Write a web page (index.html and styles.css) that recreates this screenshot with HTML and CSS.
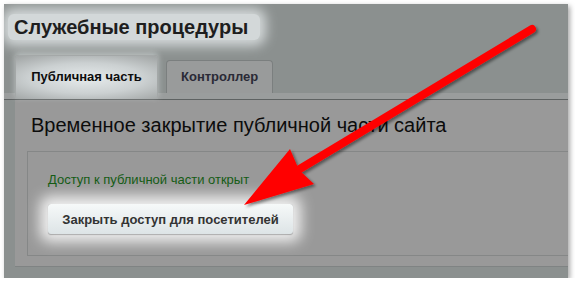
FILE: index.html
```html
<!DOCTYPE html>
<html lang="ru">
<head>
  <meta charset="UTF-8">
  <title>Служебные процедуры</title>
  <link rel="stylesheet" href="styles.css">
</head>
<body>
  <div class="shot">
    <div class="page-title"><h1>Служебные процедуры</h1></div>

    <div class="tabs">
      <div class="tab tab-active">Публичная часть</div>
      <div class="tab">Контроллер</div>
    </div>

    <div class="panel">
      <h2>Временное закрытие публичной части сайта</h2>
      <div class="inner-box">
        <p class="status-ok">Доступ к публичной части открыт</p>
        <button class="close-button" type="button">Закрыть доступ для посетителей</button>
      </div>
    </div>

    <!-- annotation arrow -->
    <svg class="arrow" width="575" height="286" viewBox="0 0 575 286">
      <defs>
        <filter id="shade" x="-10%" y="-10%" width="120%" height="120%">
          <feDropShadow dx="2" dy="2" stdDeviation="1.5" flood-color="#000" flood-opacity="0.45"/>
        </filter>
      </defs>
      <g filter="url(#shade)" fill="#ff0000">
        <line x1="532" y1="29" x2="298" y2="170" stroke="#ff0000" stroke-width="8" stroke-linecap="round"/>
        <polygon points="244,205 290,149 299,170 314,184"/>
      </g>
    </svg>
  </div>
</body>
</html>
```

FILE: styles.css
```css
body, html {
  margin: 0;
  padding: 0;
  background: #ffffff;
  font-family: 'Liberation Sans', Arial, sans-serif;
}

.shot {
  position: relative;
  width: 564px;
  height: 274px;
  margin: 4px 0 0 4px;
  background: #8b908f;
  overflow: hidden;
  box-shadow: 2px 2px 5px rgba(0,0,0,0.35);
}

.page-title {
  padding: 10px 0 0 4px;
  height: 34px;
  box-sizing: border-box;
}

h1 {
  display: inline-block;
  margin: 0;
  padding: 0 12px 0 6px;
  font-size: 20px;
  line-height: 26px;
  font-weight: bold;
  color: #1e1e1e;
  background: #d3d8d9;
  border-radius: 6px;
  box-shadow: 0 0 12px 6px #d3d8d9;
}

.tabs {
  display: flex;
  align-items: flex-end;
  gap: 8px;
  margin-top: 17px;
  padding-left: 11px;
  height: 45px;
  box-sizing: border-box;
  border-bottom: 1px solid #5e6262;
  background: linear-gradient(#8b908f 0, #8b908f 38px, #9a9d9d 38px);
}

.tab {
  padding: 0 14px;
  height: 32px;
  line-height: 31px;
  margin-bottom: 6px;
  font-size: 13px;
  font-weight: bold;
  color: #2a2a36;
  background: #999b9b;
  border: 1px solid #7b7f7f;
  border-bottom: none;
  border-radius: 4px 4px 0 0;
}

.tab-active {
  height: 44px;
  line-height: 42px;
  margin-bottom: 0;
  width: 143px;
  box-sizing: border-box;
  text-align: center;
  padding: 0;
  color: #0d0d0d;
  border-color: #a4a8a8;
  background: radial-gradient(ellipse 75% 65% at 50% 52%, #e6ebec 0, #cbd0d1 55%, #a3a7a7 100%);
  box-shadow: 0 -2px 6px rgba(220,226,227,0.6);
}

.panel {
  margin-left: 11px;
  height: 167px;
  padding: 13px 0 0 16px;
  box-sizing: border-box;
  background: #999999;
  border-bottom: 1px solid #7f8383;
}

h2 {
  margin: 0;
  font-size: 20px;
  line-height: 25px;
  font-weight: normal;
  color: #0c0c0c;
}

.inner-box {
  margin: 13px 0 0 -4px;
  height: 105px;
  padding: 20px 0 0 20px;
  box-sizing: border-box;
  border: 1px solid #858787;
  border-right: none;
}

.status-ok {
  margin: 0;
  font-size: 13px;
  line-height: 16px;
  color: #155c15;
}

.close-button {
  display: block;
  margin-top: 16px;
  width: 245px;
  height: 30px;
  font-family: inherit;
  font-size: 13px;
  font-weight: bold;
  color: #333333;
  border: none;
  border-radius: 3px;
  background: linear-gradient(#f6f9f9, #dde4e6);
  box-shadow: 0 1px 1px rgba(0,0,0,0.25), 0 0 14px 8px rgba(255,255,255,0.85);
}

.arrow {
  position: absolute;
  left: -4px;
  top: -4px;
  pointer-events: none;
}
```
